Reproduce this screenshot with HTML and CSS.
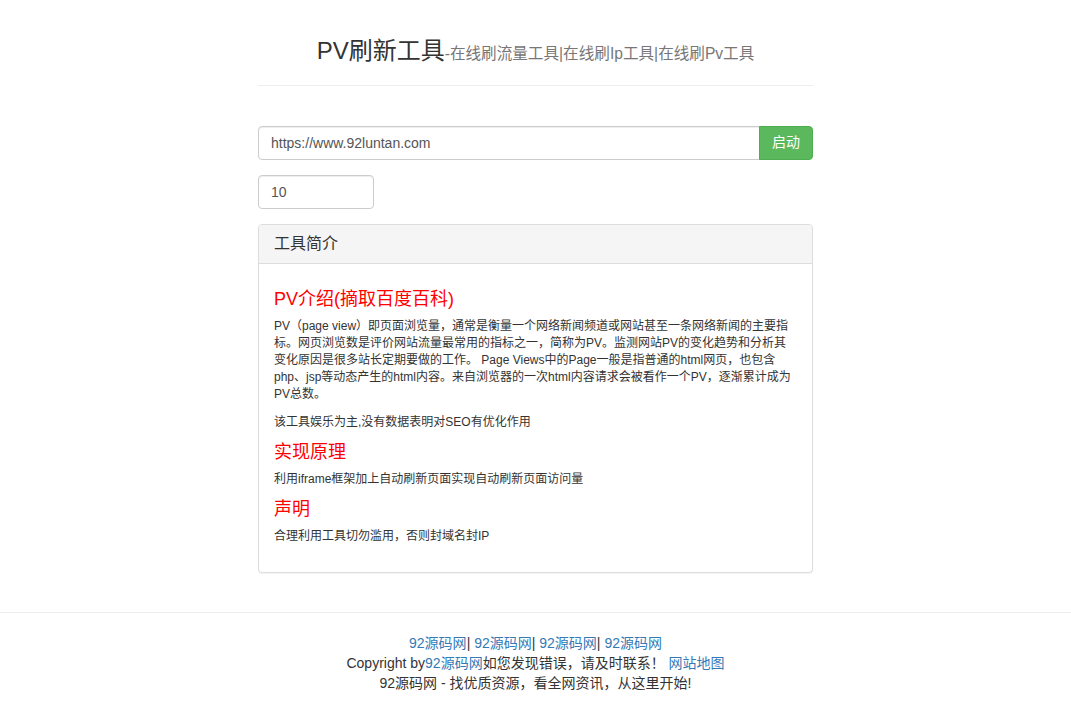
FILE: index.html
```html
<!DOCTYPE html>
<html lang="zh-CN">
<head>
    <meta charset="UTF-8">
    <meta name="viewport" content="width=device-width, initial-scale=1.0">
    <title>PV刷新工具-在线刷流量工具|在线刷Ip工具|在线刷Pv工具</title>
    <link rel="stylesheet" href="styles.css">
</head>
<body>
    <div class="container">
        <div class="page-header">
            <h1>PV刷新工具<small>-在线刷流量工具|在线刷Ip工具|在线刷Pv工具</small></h1>
        </div>

        <div class="input-group">
            <input type="text" class="form-control" id="url" value="https://www.92luntan.com">
            <button class="btn btn-success" id="start">启动</button>
        </div>

        <input type="text" class="form-control count" id="count" value="10">

        <div class="panel">
            <div class="panel-heading">工具简介</div>
            <div class="panel-body">
                <h3>PV介绍(摘取百度百科)</h3>
                <p>PV（page view）即页面浏览量，通常是衡量一个网络新闻频道或网站甚至一条网络新闻的主要指标。网页浏览数是评价网站流量最常用的指标之一，简称为PV。监测网站PV的变化趋势和分析其变化原因是很多站长定期要做的工作。 Page Views中的Page一般是指普通的html网页，也包含php、jsp等动态产生的html内容。来自浏览器的一次html内容请求会被看作一个PV，逐渐累计成为PV总数。</p>
                <p>该工具娱乐为主,没有数据表明对SEO有优化作用</p>
                <h3>实现原理</h3>
                <p>利用iframe框架加上自动刷新页面实现自动刷新页面访问量</p>
                <h3>声明</h3>
                <p>合理利用工具切勿滥用，否则封域名封IP</p>
            </div>
        </div>
    </div>

    <div class="footer">
        <div><a href="#">92源码网</a>| <a href="#">92源码网</a>| <a href="#">92源码网</a>| <a href="#">92源码网</a></div>
        <div>Copyright by<a href="#">92源码网</a>如您发现错误，请及时联系！ <a href="#">网站地图</a></div>
        <div>92源码网 - 找优质资源，看全网资讯，从这里开始!</div>
    </div>

    <script>
        // Start refreshing the target page in an iframe
        document.getElementById('start').addEventListener('click', () => {
            const url = document.getElementById('url').value;
            const seconds = parseInt(document.getElementById('count').value, 10) || 10;
            let frame = document.getElementById('pvFrame');
            if (!frame) {
                frame = document.createElement('iframe');
                frame.id = 'pvFrame';
                frame.style.display = 'none';
                document.body.appendChild(frame);
            }
            frame.src = url;
            setInterval(() => { frame.src = url; }, seconds * 1000);
        });
    </script>
</body>
</html>
```

FILE: styles.css
```css
* {
    box-sizing: border-box;
}

body {
    margin: 0;
    font-family: "Liberation Sans", "Noto Sans CJK SC", sans-serif;
    font-size: 14px;
    line-height: 1.42857;
    color: #333;
    background-color: #fff;
}

a {
    color: #337ab7;
    text-decoration: none;
}

.container {
    width: 555px;
    margin: 0 auto;
}

.page-header {
    padding-top: 37px;
    padding-bottom: 9px;
    margin-bottom: 40px;
    border-bottom: 1px solid #eee;
}

.page-header h1 {
    margin: 0 0 10px;
    font-size: 24px;
    font-weight: 400;
    line-height: 1.2;
    text-align: center;
    color: #333;
}

.page-header h1 small {
    font-size: 65%;
    color: #777;
}

.input-group {
    display: flex;
    margin-bottom: 15px;
}

.form-control {
    display: block;
    height: 34px;
    padding: 6px 12px;
    font-family: inherit;
    font-size: 14px;
    line-height: 1.42857;
    color: #555;
    background-color: #fff;
    border: 1px solid #ccc;
    border-radius: 4px;
    box-shadow: inset 0 1px 1px rgba(0, 0, 0, 0.075);
}

.input-group .form-control {
    flex: 1;
    border-radius: 4px 0 0 4px;
}

.btn {
    height: 34px;
    padding: 6px 12px;
    font-family: inherit;
    font-size: 14px;
    line-height: 1.42857;
    border: 1px solid transparent;
    cursor: pointer;
}

.btn-success {
    width: 54px;
    margin-left: -1px;
    color: #fff;
    background-color: #5cb85c;
    border-color: #4cae4c;
    border-radius: 0 4px 4px 0;
}

.count {
    width: 116px;
    margin-bottom: 15px;
}

.panel {
    margin-bottom: 39px;
    background-color: #fff;
    border: 1px solid #ddd;
    border-radius: 4px;
    box-shadow: 0 1px 1px rgba(0, 0, 0, 0.05);
}

.panel-heading {
    height: 39px;
    padding: 9px 15px;
    font-size: 16px;
    line-height: 1.3;
    color: #333;
    background-color: #f5f5f5;
    border-bottom: 1px solid #ddd;
    border-radius: 3px 3px 0 0;
}

.panel-body {
    padding: 15px 15px 17px;
}

.panel-body h3 {
    margin: 11px 0 9px;
    font-size: 18px;
    font-weight: 400;
    line-height: 20px;
    color: #f00;
}

.panel-body h3:first-child {
    margin-top: 10px;
}

.panel-body p {
    margin: 0 0 10px;
    font-size: 12px;
    line-height: 1.42857;
    color: #333;
}

.footer {
    padding: 21px 0 25px;
    text-align: center;
    border-top: 1px solid #eee;
}
```
